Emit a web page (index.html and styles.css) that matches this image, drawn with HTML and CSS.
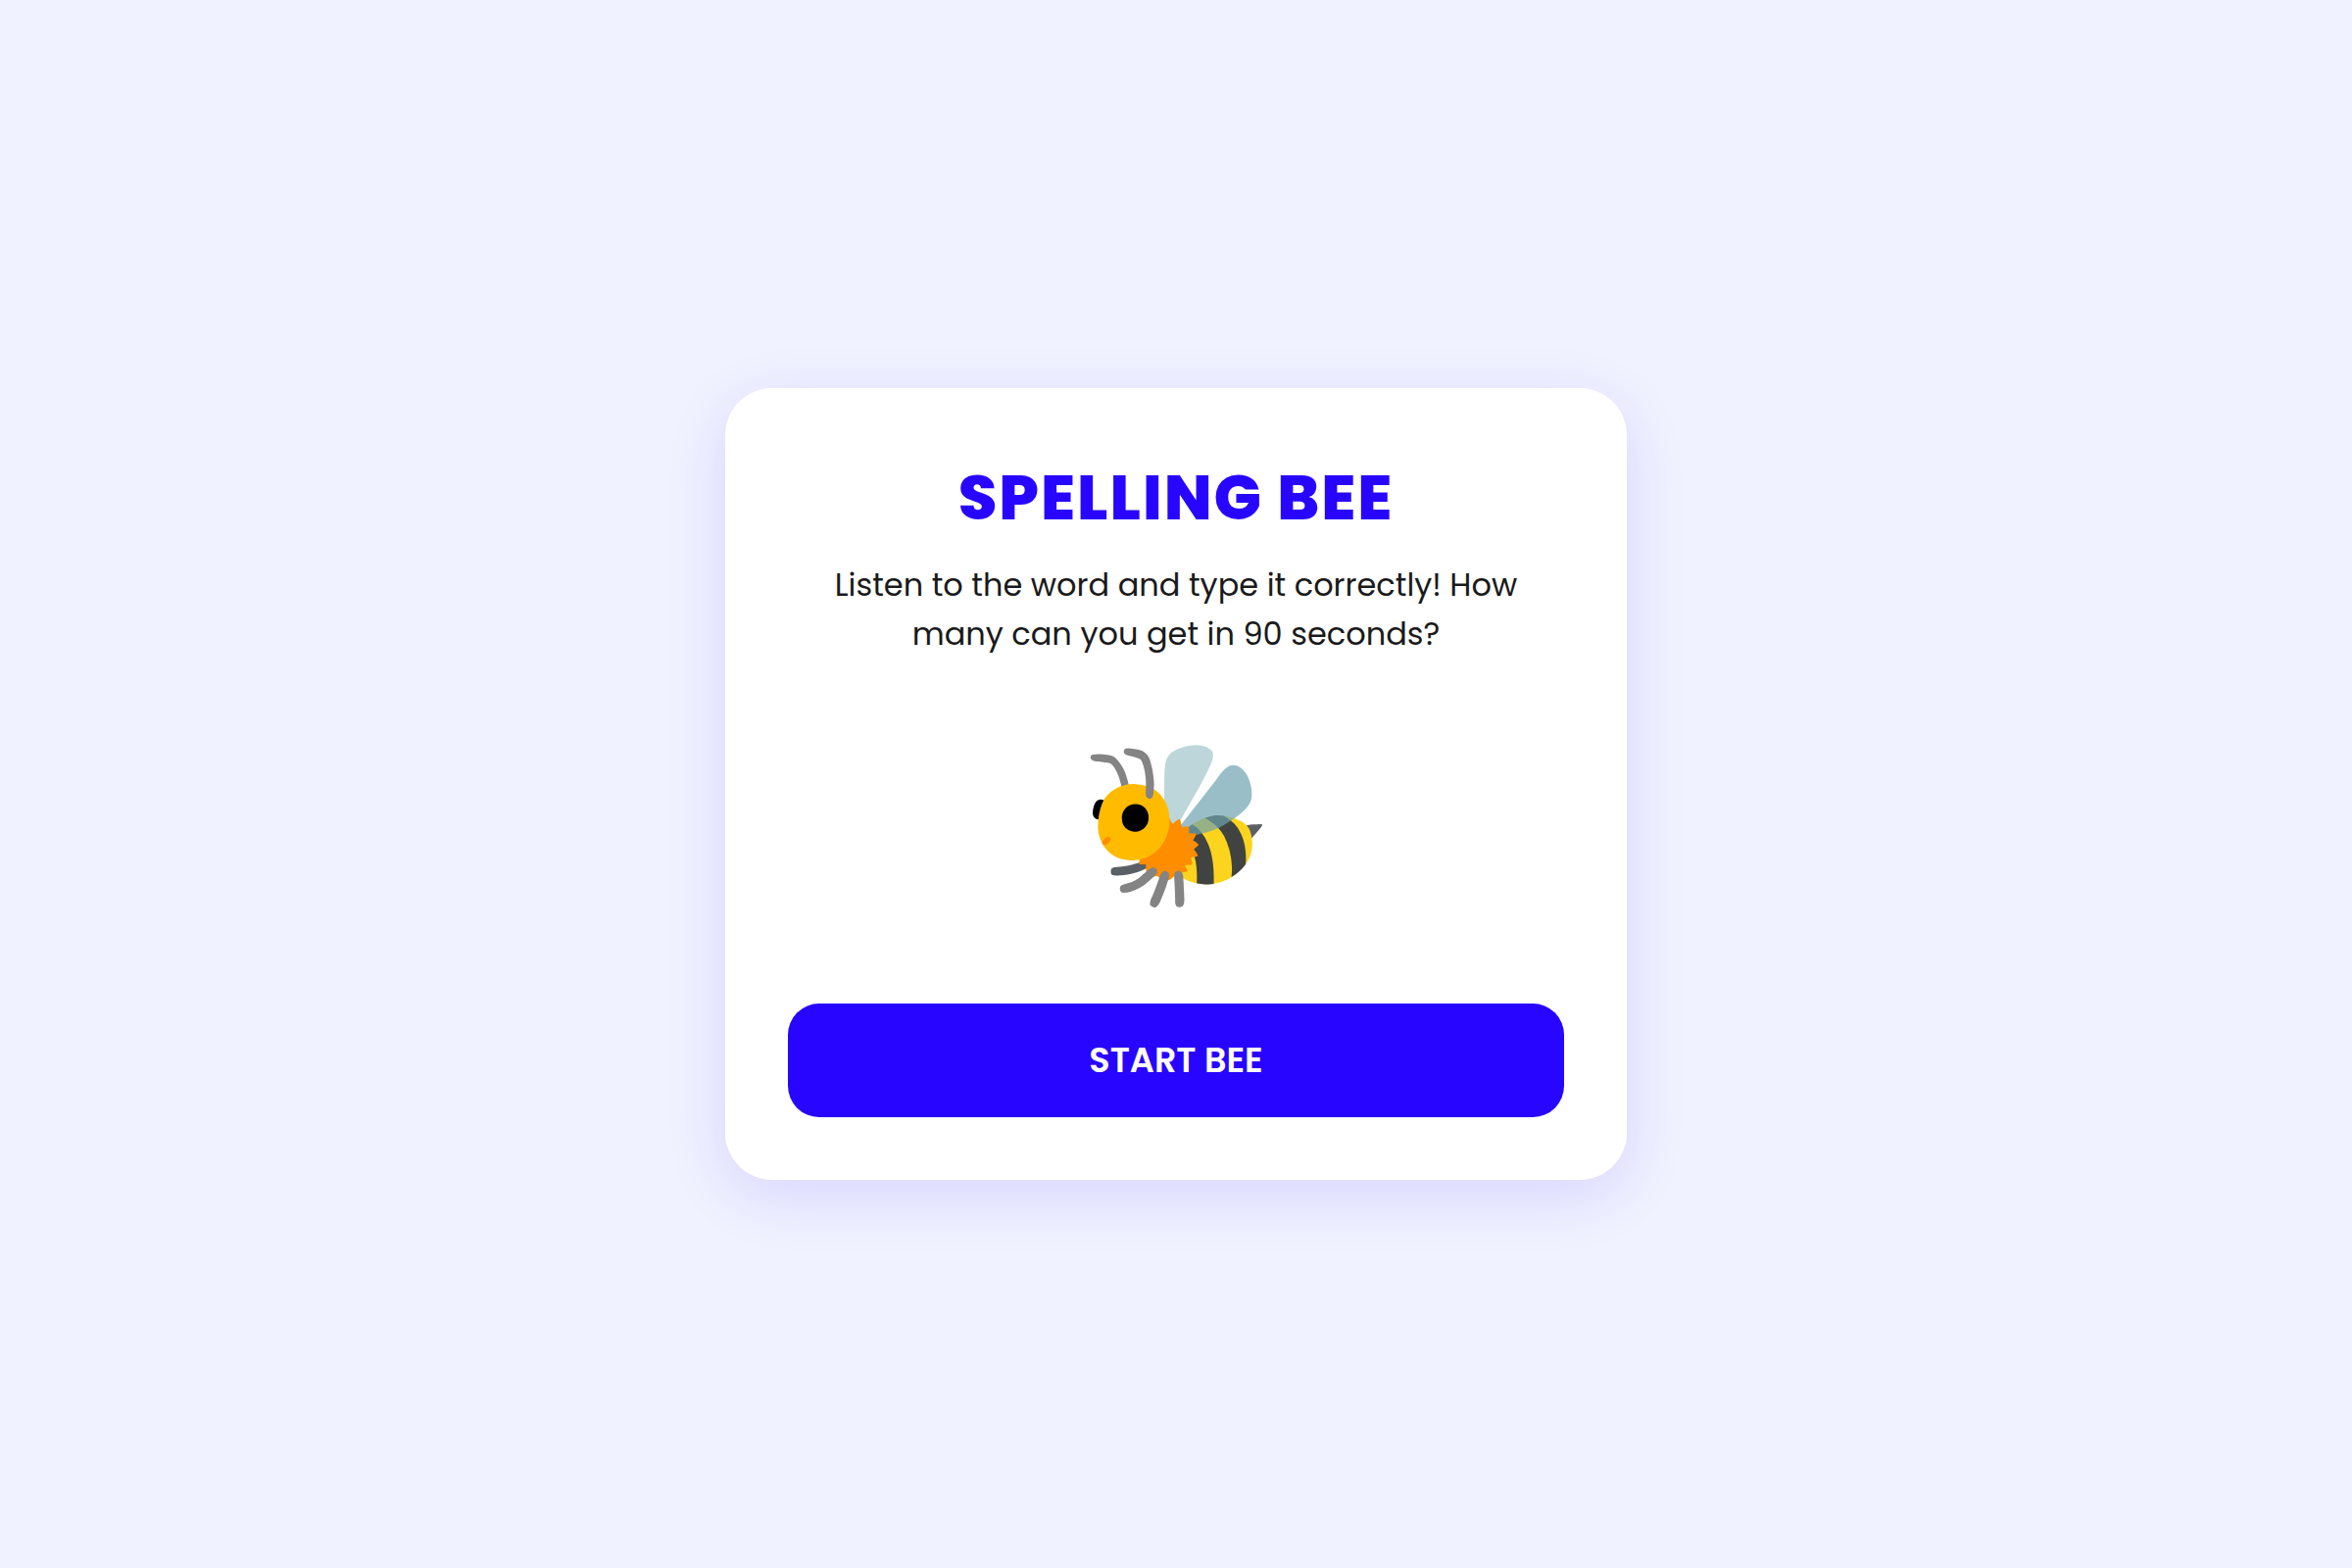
FILE: index.html
```
<!DOCTYPE html>
<html lang="en">
<head>
  <meta charset="UTF-8" />
  <meta name="viewport" content="width=device-width, initial-scale=1.0"/>
  <title>Spelling Bee</title>
  <link rel="stylesheet" href="styles.css">
</head>
<body>
  <main class="card">
    <h1 class="title">SPELLING BEE</h1>
    <p class="intro">Listen to the word and type it correctly! How many can you get in 90 seconds?</p>
    <div class="bee">🐝</div>
    <button type="button" class="start-btn">START BEE</button>
  </main>
</body>
</html>
```

FILE: styles.css
```
* {
  box-sizing: border-box;
}

body {
  font-family: Poppins, Inter, sans-serif;
  background: #f0f2ff;
  color: #1a1a1a;
  margin: 0;
  min-height: 100vh;
  display: flex;
  justify-content: center;
  align-items: center;
}

.card {
  width: 100%;
  max-width: 920px;
  padding: 64px;
  background: #fff;
  border-radius: 48px;
  box-shadow: 0 16px 64px rgba(40, 5, 255, 0.12);
  text-align: center;
}

.title {
  margin: 0 0 16px;
  font-size: 64px;
  font-weight: 800;
  line-height: 96px;
  letter-spacing: 2px;
  color: #2805ff;
}

.intro {
  margin: 0 0 48px;
  padding: 0 32px;
  font-size: 32px;
  line-height: 50px;
}

.bee {
  margin-bottom: 64px;
  font-size: 160px;
  line-height: 240px;
}

.start-btn {
  width: 100%;
  padding: 32px;
  border: none;
  border-radius: 32px;
  background: #2805ff;
  color: #fff;
  font-family: inherit;
  font-size: 35px;
  font-weight: 600;
  line-height: 52px;
  cursor: pointer;
}
```
